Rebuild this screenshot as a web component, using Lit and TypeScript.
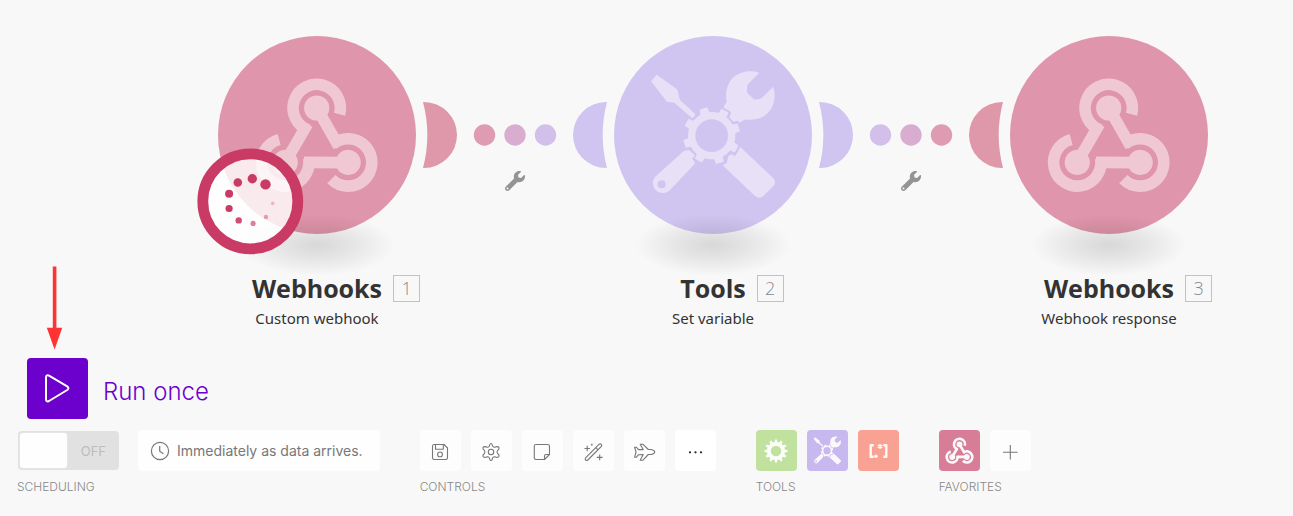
import { LitElement, html, svg, css, TemplateResult } from "lit";
import { customElement, property } from "lit/decorators.js";

/** Closed outline of a cog wheel with evenly spaced teeth. */
function cog(cx: number, cy: number, body: number, tip: number, teeth: number, phase: number, root: number, top: number): string {
  const at = (r: number, deg: number) => {
    const a = (deg * Math.PI) / 180;
    return `${(cx + r * Math.cos(a)).toFixed(2)} ${(cy + r * Math.sin(a)).toFixed(2)}`;
  };
  const step = 360 / teeth;
  let d = "";
  for (let i = 0; i < teeth; i++) {
    const a = phase + i * step;
    d += `${i ? "L" : "M"}${at(body, a - root)}L${at(tip, a - top)}L${at(tip, a + top)}L${at(body, a + root)}`;
    d += `A${body} ${body} 0 0 1 ${at(body, a + step - root)}`;
  }
  return d + "Z";
}

const ring = (cx: number, cy: number, r: number) =>
  `M${cx - r} ${cy}a${r} ${r} 0 1 0 ${2 * r} 0a${r} ${r} 0 1 0 ${-2 * r} 0Z`;

/* One knot and its bar, turned three times around the centre of the mark. */
const hookArm = svg`
  <path d="M67.2 126.3L89.4 88.2" />
  <path d="M90.6 94.3A23.7 23.7 0 1 1 121.6 78.2" />
  <circle cx="98.7" cy="72" r="6.3" stroke-width="12.6" />`;

const webhookMark = svg`
  <g fill="none" stroke="currentColor" stroke-width="11.6">
    <g>${hookArm}</g>
    <g transform="rotate(120 98.7 108.3)">${hookArm}</g>
    <g transform="rotate(240 98.7 108.3)">${hookArm}</g>
  </g>`;

const toolsMark = svg`
  <g fill="currentColor" fill-rule="evenodd">
    <path d="M290 164L351 208Q354 212 354 218L360 240L405 281Q406 290 396 294L343 248L322 245Q318 243 315 238L273 184Z" />
    <path d="${cog(455, 347, 71, 86, 8, -107, 11, 8)}${ring(455, 347, 49)}" />
    <path d="M598 158L564 192Q560 198 561 218L582 238Q590 240 604 235L640 200C651 241 638 275 606 292C588 300 570 300 553 299L540 308L533 302L520 305L508 292L514 277L490 262L500 246C494 215 503 185 525 168C546 153 572 150 598 158Z" />
    <path d="M372 392L387 390L405 406L397 416L406 430L328 512A30 30 0 0 1 284 472Z${ring(305, 493, 12)}" />
    <path d="M541 381L640 475Q648 484 643 495L610 528Q598 538 586 529L488 436L500 430L505 408L514 403L526 408Z" />
  </g>`;

type AppKind = "webhook" | "tools";

@customElement("module-node")
class ModuleNode extends LitElement {
  @property() kind: AppKind = "webhook";
  @property() name = "";
  @property() action = "";
  @property({ type: Number }) step = 1;
  @property({ type: Boolean }) waiting = false;

  static styles = css`
    :host { display: flex; flex-direction: column; align-items: center; width: 198px; flex: none; position: relative; }
    .disc { display: block; width: 198px; height: 237px; overflow: visible; }
    .webhook { color: #efc8d3; }
    .webhook .face { fill: #df95ab; }
    .tools { color: #e8e0f7; }
    .tools .face { fill: #d0c5f0; }
    .title { position: relative; margin: 0; font: 700 25px/30px "Open Sans", "Noto Sans", sans-serif; color: #333; white-space: nowrap; }
    .step { position: absolute; left: calc(100% + 11px); top: 2px; box-sizing: border-box; width: 27px; height: 27px; border: 1px solid #c2c2c2; font: 300 18px/25px "Open Sans", "Noto Sans", sans-serif; color: #888; text-align: center; }
    .action { margin: 3px 0 0; font: 400 15px/24px "Noto Sans", sans-serif; color: #333; white-space: nowrap; }
    .spinner { position: absolute; left: -21px; top: 112px; width: 107px; height: 107px; }
  `;

  private renderSpinner() {
    const dots = [
      [75.5, 36.4, 5.2, 1], [62.3, 30.8, 4.7, 1], [47.8, 34.5, 4.3, 1], [39.1, 45.7, 4, 1],
      [39.1, 60.5, 3.6, 1], [48.7, 72.4, 3.2, 0.9], [63.1, 75.4, 2.6, 0.65], [76, 69, 2.2, 0.45], [82.7, 55.4, 1.8, 0.3],
    ];
    return html`<svg class="spinner" viewBox="7 0 107 107" role="img" aria-label="Waiting for data">
      <circle cx="60.3" cy="53.3" r="47.5" fill="#fff" fill-opacity=".8" />
      <circle cx="60.3" cy="53.3" r="47.5" fill="none" stroke="#c93a64" stroke-width="10.8" />
      ${dots.map(([x, y, r, o]) => svg`<circle cx=${x} cy=${y} r=${r} fill="#c93a64" fill-opacity=${o} />`)}
    </svg>`;
  }

  render() {
    return html`
      <svg class="disc ${this.kind}" viewBox="0 0 198 237" aria-hidden="true">
        <defs>
          <radialGradient id="shade">
            <stop offset="0" stop-color="#000" stop-opacity=".13" />
            <stop offset=".5" stop-color="#000" stop-opacity=".07" />
            <stop offset="1" stop-color="#000" stop-opacity="0" />
          </radialGradient>
        </defs>
        <circle class="face" cx="99" cy="99" r="99" />
        ${this.kind === "webhook"
          ? webhookMark
          : svg`<g transform="translate(-54 -16) scale(.33333)">${toolsMark}</g>`}
        <ellipse cx="99" cy="209" rx="78" ry="31" fill="url(#shade)" />
      </svg>
      ${this.waiting ? this.renderSpinner() : null}
      <h2 class="title">${this.name}<span class="step">${this.step}</span></h2>
      <p class="action">${this.action}</p>
    `;
  }
}

@customElement("module-link")
class ModuleLink extends LitElement {
  @property({ attribute: false }) colors: string[] = [];

  static styles = css`
    :host { display: flex; flex-direction: column; align-items: center; width: 198px; flex: none; padding-top: 66px; }
    .wire { display: block; width: 198px; height: 66px; }
    .filter { margin: 3px 0 0; padding: 0; border: 0; background: none; color: #949494; display: block; }
    .wrench { display: block; width: 20px; height: 20px; }
  `;

  render() {
    const [from, a, b, c, to] = this.colors;
    return html`
      <svg class="wire" viewBox="0 0 198 66" aria-hidden="true">
        <path fill=${from} d="M7 0H8A33 33 0 0 1 8 66H7A130 130 0 0 0 7 0Z" />
        <circle cx="68.5" cy="33" r="10.7" fill=${a} />
        <circle cx="99" cy="33" r="10.7" fill=${b} />
        <circle cx="129.5" cy="33" r="10.7" fill=${c} />
        <path fill=${to} d="M191 0H190A33 33 0 0 0 190 66H191A130 130 0 0 1 191 0Z" />
      </svg>
      <button class="filter" aria-label="Set up a filter">
        <svg class="wrench" viewBox="0 0 512 512" fill="currentColor"><path d="M507.73 109.1c-2.24-9.03-13.54-12.09-20.12-5.51l-74.36 74.36-67.88-11.31-11.31-67.88 74.36-74.36c6.62-6.62 3.43-17.9-5.66-20.16-47.38-11.74-99.55.91-136.58 37.93-39.64 39.64-50.55 97.1-34.05 147.2L18.74 402.76c-24.99 24.99-24.99 65.51 0 90.5 24.99 24.99 65.51 24.99 90.5 0l213.21-213.21c50.12 16.71 107.47 5.68 147.37-34.22 37.07-37.07 49.7-89.32 37.91-136.73zM64 472c-13.25 0-24-10.75-24-24 0-13.26 10.75-24 24-24s24 10.74 24 24c0 13.25-10.75 24-24 24z" /></svg>
      </button>
    `;
  }
}

interface Tool { label: string; look: string; icon: TemplateResult; }

/* Button icons share a 41 x 41 grid, the size of the button itself. */
const controls: Tool[] = [
  { label: "Save", look: "plain", icon: svg`<g class="line"><path d="M14.2 14.5H24L27.5 18V27.8Q27.5 29.5 25.8 29.5H14.2Q12.5 29.5 12.5 27.8V16.2Q12.5 14.5 14.2 14.5Z" /><path d="M15.5 14.8V19.3H23.3V14.8" /><circle cx="20" cy="24.4" r="2.4" /></g>` },
  { label: "Scenario settings", look: "plain", icon: svg`<g class="line"><circle cx="20" cy="22" r="2.7" /><path d="M18.5 15.6Q18.9 13.5 20 13.5Q21.1 13.5 21.5 15.6Q21.9 17.3 23.6 17.2Q27.2 15.8 28 17.6Q28.7 19 26.6 20.5Q25.4 22 26.6 23.5Q28.7 25 28 26.4Q27.2 28.2 23.6 26.8Q21.9 26.7 21.5 28.4Q21.1 30.5 20 30.5Q18.9 30.5 18.5 28.4Q18.1 26.7 16.4 26.8Q12.8 28.2 12 26.4Q11.3 25 13.4 23.5Q14.6 22 13.4 20.5Q11.3 19 12 17.6Q12.8 15.8 16.4 17.2Q18.1 17.3 18.5 15.6Z" /></g>` },
  { label: "Notes", look: "plain", icon: svg`<g class="line"><path d="M14 14.5H25.5Q27.5 14.5 27.5 16.5V24.5L22.5 29.5H14Q12.3 29.5 12.3 27.8V16.2Q12.3 14.5 14 14.5Z" /><path d="M27.5 24.5H24Q22.5 24.5 22.5 26V29.5" /></g>` },
  { label: "Auto-align", look: "plain", icon: svg`<g class="line"><path d="M12.6 27.8L26.2 14.2Q27.2 13.4 28.3 14.4Q29.2 15.4 28.4 16.4L14.8 30Q13.7 30.9 12.6 30Q11.6 28.9 12.6 27.8Z" /><path d="M22.8 17.6L25.1 19.8" /><path d="M14.2 15.8V21.2M11.5 18.5H16.9M26.7 24.5V30.3M23.8 27.4H29.6M18.8 13.8V15.6M17.9 14.7H19.7" /></g>` },
  { label: "Explain flow", look: "plain", icon: svg`<g class="line"><path d="M19.2 19.6L16.2 14.2H18.8L24.3 19.5H27.3Q30.8 20.6 30.8 22Q30.8 23.4 27.3 24.5H24.3L18.8 30.3H16.2L19.2 24.5L14.5 24.7L12.3 27.3H10.6L12 22L10.6 17.2H12.3L14.5 19.6Z" /></g>` },
  { label: "More", look: "solid", icon: svg`<g fill="#222"><circle cx="15" cy="22.3" r="1.1" /><circle cx="20.5" cy="22.3" r="1.1" /><circle cx="26" cy="22.3" r="1.1" /></g>` },
];

const tools: Tool[] = [
  { label: "Flow control", look: "green", icon: svg`<path fill="#fff" fill-opacity=".93" fill-rule="evenodd" d="${cog(20, 21, 9, 11.5, 12, 0, 9, 5)}${ring(20, 21, 5.2)}" />` },
  { label: "Tools", look: "violet", icon: svg`<g class="mark" transform="translate(-13.4 -4.8) scale(.0735)">${toolsMark}</g>` },
  { label: "Text parser", look: "orange", icon: svg`<g fill="none" stroke="#fff" stroke-opacity=".93"><path stroke-width="2.4" stroke-linejoin="round" d="M15.7 15.2H12.7V26.8H15.7M25.3 15.2H28.3V26.8H25.3" /><path stroke-width="1.5" d="M22 13.9V18.9M19.7 15.1L24.3 17.7M24.3 15.1L19.7 17.7" /></g><circle cx="18" cy="26.3" r="1.7" fill="#fff" fill-opacity=".93" />` },
];

const favorites: Tool[] = [
  { label: "Webhooks", look: "pink", icon: svg`<g class="mark" transform="translate(-2.4 -2.4) scale(.232)">${webhookMark}</g>` },
  { label: "Add favorite", look: "plain", icon: svg`<path class="line" d="M20.3 15V29.4M13 22.3H27.6" />` },
];

@customElement("app-root")
class AppRoot extends LitElement {
  static styles = css`
    :host { display: flex; flex-direction: column; position: relative; box-sizing: border-box; min-height: 100vh; padding-top: 36px; background: #f8f8f8; overflow: hidden; font-family: Inter, "Liberation Sans", sans-serif; }
    .flow { display: flex; align-items: flex-start; padding-left: 218px; }
    .run { display: flex; align-items: center; gap: 15px; margin: 28px 0 0 27px; }
    .play { width: 61px; height: 61px; padding: 0; border: 0; border-radius: 4px; background: #6c00cc; }
    .play-icon { display: block; width: 61px; height: 61px; }
    .run-label { padding-top: 6px; font-size: 24px; line-height: 32px; font-weight: 300; color: #6c00cc; }
    .pointer { position: absolute; left: 46px; top: 266px; width: 17px; height: 84px; }
    .bar { display: flex; align-items: flex-start; gap: 40px; margin: 11px 0 0 17px; }
    .row { display: flex; align-items: center; gap: 10px; height: 41px; }
    .schedule { gap: 19px; padding-left: 1px; }
    .caption { display: block; margin: 8px 0 0; font-size: 12px; line-height: 16px; font-weight: 300; color: #888; }
    .switch { position: relative; display: flex; align-items: center; justify-content: flex-end; box-sizing: border-box; width: 101px; height: 39px; padding-right: 13px; border-radius: 4px; background: #e1e1e1; font-size: 13px; color: #bdbdbd; }
    .check { position: absolute; inset: 2px auto 2px 2px; width: 47px; margin: 0; appearance: none; border-radius: 3px; background: #fefefe; box-shadow: 0 0 2px #eee; }
    .when { display: flex; align-items: center; gap: 7px; height: 41px; padding: 0 17px 0 12px; border: 0; border-radius: 4px; background: #fefefe; font: 400 14px/20px Inter, "Liberation Sans", sans-serif; color: #777; white-space: nowrap; }
    .clock { display: block; width: 20px; height: 20px; }
    .tool { width: 41px; height: 41px; padding: 0; border: 0; border-radius: 4px; background: #fdfdfd; }
    .tool-icon { display: block; width: 41px; height: 41px; }
    .line { fill: none; stroke: #777; stroke-width: 1.1; stroke-linejoin: round; }
    .mark { color: #fbf8fc; }
    .solid { background: #fff; }
    .green { background: #c1e19e; }
    .violet { background: #c7b8ef; }
    .orange { background: #f9a192; }
    .pink { background: #d77d98; }
  `;

  private renderGroup(caption: string, items: Tool[]) {
    return html`<section aria-label=${caption}>
      <div class="row">
        ${items.map((t) => html`<button class="tool ${t.look}" aria-label=${t.label}>
          <svg class="tool-icon" viewBox="0 0 41 41">${t.icon}</svg>
        </button>`)}
      </div>
      <span class="caption">${caption}</span>
    </section>`;
  }

  render() {
    return html`
      <main class="flow">
        <module-node kind="webhook" name="Webhooks" action="Custom webhook" step="1" waiting></module-node>
        <module-link .colors=${["#de98a9", "#de9bb2", "#d8adcf", "#d3c0ea", "#d0c5f0"]}></module-link>
        <module-node kind="tools" name="Tools" action="Set variable" step="2"></module-node>
        <module-link .colors=${["#d0c5f0", "#d3c0ea", "#d8adcf", "#de9bb2", "#de98a9"]}></module-link>
        <module-node kind="webhook" name="Webhooks" action="Webhook response" step="3"></module-node>
      </main>

      <svg class="pointer" viewBox="0 0 17 84" aria-hidden="true">
        <path fill="#f33" d="M6.8 .5H10.4V61.7H16.2L8.6 83.5L.8 61.7H6.8Z" />
      </svg>

      <div class="run">
        <button class="play" id="run" aria-labelledby="run-label">
          <svg class="play-icon" viewBox="0 0 61 61" fill="none" stroke="#fff" stroke-width="2" stroke-linejoin="round">
            <path d="M19 19.5Q19 16.4 22 17.6L40.2 28.4Q42.6 30.2 40.2 32L22 43Q19 44.4 19 41.2Z" />
          </svg>
        </button>
        <label class="run-label" id="run-label" for="run">Run once</label>
      </div>

      <footer class="bar">
        <section>
          <div class="row schedule">
            <label class="switch"><input class="check" id="schedule-switch" type="checkbox" role="switch" aria-labelledby="scheduling" />OFF</label>
            <button class="when">
              <svg class="clock" viewBox="0 0 20 20" fill="none" stroke="#777" stroke-width="1.2">
                <circle cx="10" cy="10" r="8.6" /><path d="M9.7 5V10.2L13.4 12.7" />
              </svg>
              Immediately as data arrives.
            </button>
          </div>
          <label class="caption" id="scheduling" for="schedule-switch">SCHEDULING</label>
        </section>
        ${this.renderGroup("CONTROLS", controls)}
        ${this.renderGroup("TOOLS", tools)}
        ${this.renderGroup("FAVORITES", favorites)}
      </footer>
    `;
  }
}
